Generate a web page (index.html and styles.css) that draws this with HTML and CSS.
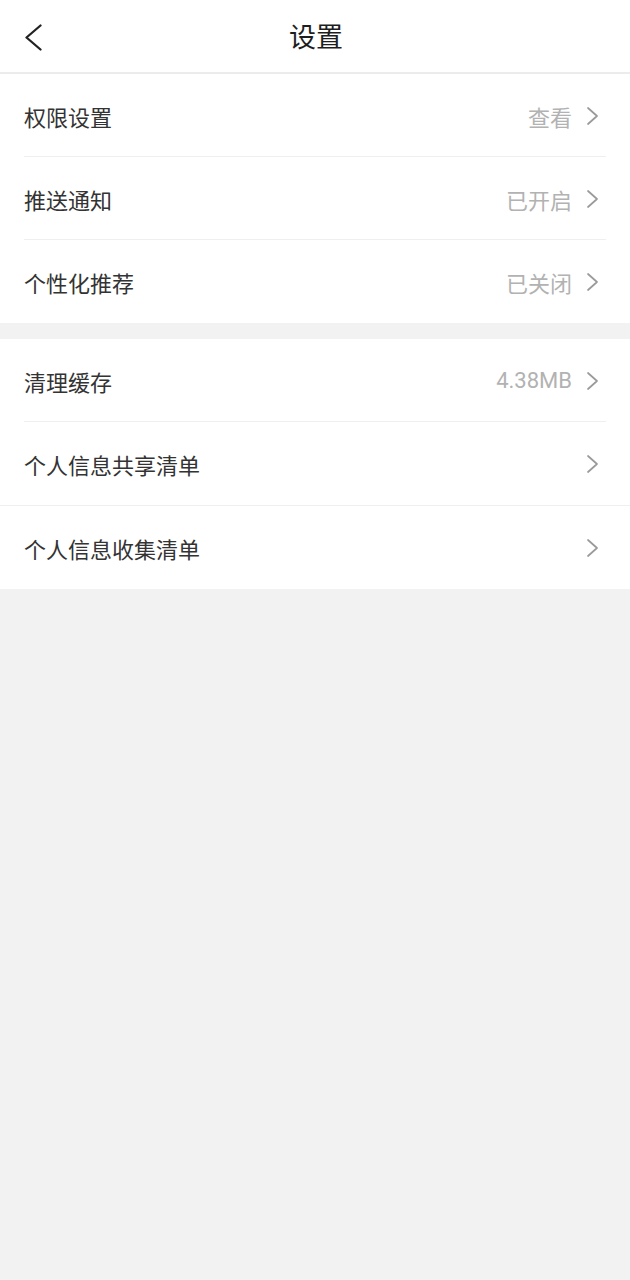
FILE: index.html
```html
<!DOCTYPE html>
<html lang="zh-CN">
<head>
<meta charset="utf-8">
<title>设置</title>
<link rel="stylesheet" href="styles.css">
</head>
<body>
<div class="page">
  <header class="topbar">
    <div class="back">
      <svg width="19" height="27" viewBox="0 0 19 27"><path d="M16.5 1.5 L2.5 13.5 L16.5 25.5" fill="none" stroke="#222" stroke-width="2.3" stroke-linecap="round" stroke-linejoin="round"/></svg>
    </div>
    <h1 class="title">设置</h1>
    <div class="spacer"></div>
  </header>

  <section class="group">
    <div class="row"><div class="inner"><span class="label">权限设置</span><span class="value">查看</span><svg class="chev" width="13" height="20" viewBox="0 0 13 20"><path d="M2 2 L11 10 L2 18" fill="none" stroke="#9a9a9a" stroke-width="1.7" stroke-linecap="round" stroke-linejoin="round"/></svg></div></div>
    <div class="row"><div class="inner"><span class="label">推送通知</span><span class="value">已开启</span><svg class="chev" width="13" height="20" viewBox="0 0 13 20"><path d="M2 2 L11 10 L2 18" fill="none" stroke="#9a9a9a" stroke-width="1.7" stroke-linecap="round" stroke-linejoin="round"/></svg></div></div>
    <div class="row last"><div class="inner"><span class="label">个性化推荐</span><span class="value">已关闭</span><svg class="chev" width="13" height="20" viewBox="0 0 13 20"><path d="M2 2 L11 10 L2 18" fill="none" stroke="#9a9a9a" stroke-width="1.7" stroke-linecap="round" stroke-linejoin="round"/></svg></div></div>
  </section>

  <section class="group second">
    <div class="row"><div class="inner"><span class="label">清理缓存</span><span class="value">4.38MB</span><svg class="chev" width="13" height="20" viewBox="0 0 13 20"><path d="M2 2 L11 10 L2 18" fill="none" stroke="#9a9a9a" stroke-width="1.7" stroke-linecap="round" stroke-linejoin="round"/></svg></div></div>
    <div class="row full"><div class="inner"><span class="label">个人信息共享清单</span><span class="value"></span><svg class="chev" width="13" height="20" viewBox="0 0 13 20"><path d="M2 2 L11 10 L2 18" fill="none" stroke="#9a9a9a" stroke-width="1.7" stroke-linecap="round" stroke-linejoin="round"/></svg></div></div>
    <div class="row last"><div class="inner"><span class="label">个人信息收集清单</span><span class="value"></span><svg class="chev" width="13" height="20" viewBox="0 0 13 20"><path d="M2 2 L11 10 L2 18" fill="none" stroke="#9a9a9a" stroke-width="1.7" stroke-linecap="round" stroke-linejoin="round"/></svg></div></div>
  </section>
</div>
</body>
</html>
```

FILE: styles.css
```css
html, body {
  margin: 0;
  padding: 0;
  background: #f2f2f2;
}
body {
  font-family: Roboto, "Noto Sans CJK SC", sans-serif;
  width: 630px;
  min-height: 1280px;
}
.page {
  display: flex;
  flex-direction: column;
}
.topbar {
  height: 72px;
  background: #fff;
  border-bottom: 2px solid #ececec;
  display: grid;
  grid-template-columns: 1fr auto 1fr;
  align-items: center;
}
.back {
  padding-left: 24px;
  display: flex;
  align-items: center;
  height: 72px;
}
.title {
  margin: 0;
  font-size: 27px;
  font-weight: 400;
  color: #1e1e1e;
  line-height: 72px;
  padding-left: 2px;
  padding-top: 2px;
}
.group {
  background: #fff;
}
.group.second {
  margin-top: 16px;
}
.row {
  height: 83px;
  display: flex;
}
.row .inner {
  flex: 1;
  margin: 0 24px;
  display: flex;
  align-items: center;
  border-bottom: 1px solid #efefef;
  padding-top: 1px;
}
.row.last .inner {
  border-bottom: none;
}
.row.full {
  border-bottom: 1px solid #efefef;
}
.row.full .inner {
  border-bottom: none;
}
.label {
  flex: 1;
  font-size: 22px;
  color: #333;
}
.value {
  font-size: 22px;
  color: #b2b2b2;
  margin-right: 14px;
}
.chev {
  margin-right: 7px;
  flex: none;
}
```
